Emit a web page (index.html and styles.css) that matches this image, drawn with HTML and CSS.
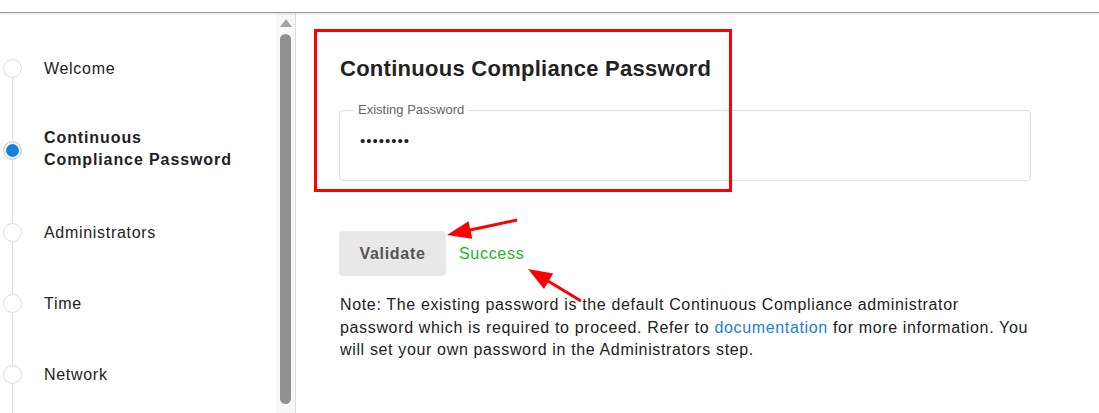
FILE: index.html
```html
<!DOCTYPE html>
<html lang="en">
<head>
<meta charset="utf-8">
<title>Continuous Compliance Password</title>
<link rel="stylesheet" href="styles.css">
</head>
<body>
<div class="topbar"></div>
<div class="layout">
  <nav class="sidebar">
    <ol class="stepper">
      <li class="step"><span class="dot"></span><span class="label">Welcome</span></li>
      <li class="step step-two active"><span class="dot"></span><span class="label">Continuous<br>Compliance Password</span></li>
      <li class="step"><span class="dot"></span><span class="label">Administrators</span></li>
      <li class="step"><span class="dot"></span><span class="label">Time</span></li>
      <li class="step last"><span class="dot"></span><span class="label">Network</span></li>
    </ol>
  </nav>
  <div class="scrolltrack">
    <span class="scroll-up"></span>
    <span class="scroll-thumb"></span>
  </div>
  <main class="content">
    <h1 class="title">Continuous Compliance Password</h1>
    <fieldset class="field">
      <legend class="field-legend">Existing Password</legend>
      <div class="field-value">&#8226;&#8226;&#8226;&#8226;&#8226;&#8226;&#8226;&#8226;</div>
    </fieldset>
    <div class="actions">
      <button class="btn">Validate</button>
      <span class="status">Success</span>
    </div>
    <p class="note">Note: The existing password is the default Continuous Compliance administrator password which is required to proceed. Refer to <a class="link" href="#">documentation</a> for more information. You will set your own password in the Administrators step.</p>
  </main>
</div>
<div class="highlight"></div>
<svg class="arrows" width="1099" height="413" viewBox="0 0 1099 413">
  <line x1="517" y1="220" x2="469" y2="230.3" stroke="#ff0000" stroke-width="3"/>
  <polygon points="447,235 472.3,238.8 468.5,221.2" fill="#ff0000"/>
  <line x1="581" y1="301" x2="548" y2="281" stroke="#ff0000" stroke-width="3"/>
  <polygon points="528,269 553.2,273.6 544,289" fill="#ff0000"/>
</svg>
</body>
</html>
```
FILE: styles.css
```css
html, body {
  margin: 0;
  padding: 0;
  background: #ffffff;
  font-family: "Liberation Sans", Arial, sans-serif;
  color: #222222;
  overflow: hidden;
}
.topbar {
  height: 12px;
  border-bottom: 1px solid #9a9a9a;
  box-shadow: 0 1px 2px rgba(0,0,0,0.12);
  position: relative;
  z-index: 2;
}
.layout {
  display: flex;
  height: 400px;
  overflow: hidden;
}
.sidebar {
  width: 276px;
  flex: none;
}
.stepper {
  list-style: none;
  margin: 0;
  padding: 20px 0 0 0;
}
.step {
  position: relative;
  display: flex;
  align-items: center;
  height: 71px;
  font-size: 16px;
  letter-spacing: 0.7px;
}
.step-two {
  height: 93px;
}
.step::before {
  content: "";
  position: absolute;
  left: 12px;
  top: 50%;
  height: 100%;
  width: 1px;
  background: #dddddd;
}
.step-two::before {
  height: 82px;
}
.step.last::before {
  height: 60px;
}
.dot {
  position: relative;
  z-index: 1;
  box-sizing: border-box;
  width: 19px;
  height: 19px;
  margin-left: 3px;
  border: 1px solid #dddddd;
  border-radius: 50%;
  background: #ffffff;
  flex: none;
}
.active .dot {
  background: #1a7fdc;
  box-shadow: inset 0 0 0 2px #ffffff;
}
.label {
  margin-left: 22px;
  line-height: 22px;
  color: #222222;
}
.step-two .label {
  margin-bottom: 4px;
}
.active .label {
  font-weight: bold;
  letter-spacing: 0.9px;
}
.scrolltrack {
  width: 19px;
  flex: none;
  background: #f7f7f7;
  border-right: 1px solid #dddddd;
  display: flex;
  flex-direction: column;
  align-items: center;
}
.scroll-up {
  margin-top: 6px;
  width: 0;
  height: 0;
  border-left: 6px solid transparent;
  border-right: 6px solid transparent;
  border-bottom: 8px solid #a3a3a3;
}
.scroll-thumb {
  margin-top: 7px;
  width: 11px;
  height: 370px;
  border-radius: 6px;
  background: #909090;
}
.content {
  flex: 1;
  padding: 40px 0 0 44px;
  box-sizing: border-box;
}
.title {
  margin: 0;
  font-size: 22px;
  font-weight: bold;
  line-height: 32px;
  letter-spacing: 0.27px;
  color: #222222;
}
.field {
  margin: 18px 0 0 -1px;
  width: 692px;
  height: 78px;
  box-sizing: border-box;
  border: 1px solid #dddddd;
  border-radius: 4px;
  padding: 0 0 0 20px;
}
.field-legend {
  font-size: 13px;
  color: #666666;
  padding: 0 4px;
  margin-left: -6px;
  line-height: 14px;
}
.field-value {
  font-size: 15px;
  line-height: 20px;
  margin-top: 14px;
  letter-spacing: 1px;
  color: #222222;
}
.actions {
  display: flex;
  align-items: center;
  margin-top: 50px;
  margin-left: -1px;
}
.btn {
  width: 107px;
  height: 45px;
  border: none;
  border-radius: 4px;
  background: #e8e8e8;
  color: #555555;
  font-family: "Liberation Sans", Arial, sans-serif;
  font-size: 16px;
  font-weight: bold;
  letter-spacing: 0.7px;
  padding: 0;
}
.status {
  margin-left: 13px;
  font-size: 16px;
  letter-spacing: 0.7px;
  color: #22b32a;
}
.note {
  margin: 18px 0 0 0;
  width: 692px;
  font-size: 16px;
  line-height: 22.5px;
  letter-spacing: 0.65px;
  color: #222222;
}
.link {
  color: #1a7fd4;
  text-decoration: none;
}
.highlight {
  position: absolute;
  left: 314px;
  top: 29px;
  width: 412px;
  height: 157px;
  border: 3px solid #ff0000;
  pointer-events: none;
}
.arrows {
  position: absolute;
  left: 0;
  top: 0;
  pointer-events: none;
}
```
